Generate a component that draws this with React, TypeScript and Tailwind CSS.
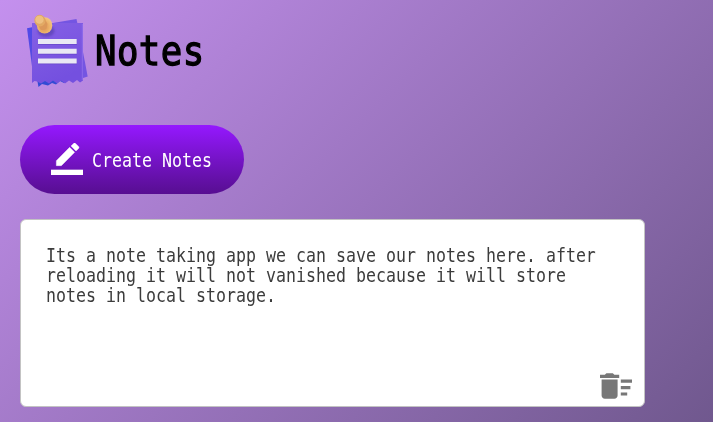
const NoteLogo = () => (
  <svg width="66" height="78" viewBox="24 12 66 78" aria-hidden="true">
    <defs>
      <linearGradient id="paper" x1="0" y1="0" x2="0.4" y2="1">
        <stop offset="0" stopColor="#8560e5" />
        <stop offset="1" stopColor="#7450df" />
      </linearGradient>
      <linearGradient id="back" x1="0" y1="0" x2="0" y2="1">
        <stop offset="0" stopColor="#4f49e8" />
        <stop offset="1" stopColor="#5c4ddd" />
      </linearGradient>
      <radialGradient id="pin" cx="0.45" cy="0.6" r="0.6">
        <stop offset="0" stopColor="#d98f50" />
        <stop offset="0.6" stopColor="#ecb268" />
        <stop offset="1" stopColor="#f2c680" />
      </radialGradient>
      <filter id="soft" x="-50%" y="-50%" width="200%" height="200%">
        <feGaussianBlur stdDeviation="1.3" />
      </filter>
    </defs>
    <path d="M50 23.500L76.500 19L77.500 24L83 52L87.700 76.500L83 78L60 80Z" fill="#7455e2" />
    <path d="M27 28.300L33 27V74Z" fill="url(#back)" />
    <path d="M37 79L38.500 87L42 84L48 85.500L52 83L56 84.500L60 81L64 83L66 79Z" fill="#334bd4" />
    <path d="M32 23H83V80.500L80 82.500L77 80L73 83L69 80.500L65 83.500L61 80.500L57 83.500L53 80.500L49 83.500L45 81L41 83.500L37 81.500L34.500 81L32 83Z" fill="url(#paper)" />
    <path d="M82.300 24V80" stroke="#9472ed" strokeWidth="0.8" />
    <ellipse cx="46" cy="31" rx="8.500" ry="6" fill="#533da9" opacity="0.6" filter="url(#soft)" />
    <path d="M38 42H77M38 51.700H77M38 61.400H77" stroke="#5d3fbd" strokeWidth="5.500" opacity="0.65" />
    <path d="M38 41.500H76.700M38 51.200H76.700M38 60.900H76.700" stroke="#e9e8f4" strokeWidth="5" />
    <ellipse cx="44.600" cy="25.400" rx="7.700" ry="8.200" fill="url(#pin)" />
    <path d="M36.500 22L40.500 29.500Q44 31 46.500 28.500L47.500 24L44.500 18Z" fill="#db985a" />
    <ellipse cx="40" cy="20.700" rx="5.500" ry="5.700" fill="#e3aa64" />
    <ellipse cx="39.500" cy="19.700" rx="4.600" ry="4.500" fill="#eec080" stroke="#d99d5d" strokeWidth="0.6" />
  </svg>
);

const PencilIcon = () => (
  <svg width="32" height="32" viewBox="0 0 24 24" fill="currentColor" aria-hidden="true">
    <path
      d="M17.750 7L14 3.250l-10 10V17h3.750l10-10zm2.960-2.960c.39-.39.39-1.020 0-1.410L18.370.29a.996.996 0 00-1.410 0L15 2.250 18.750 6l1.960-1.960z"
      stroke="currentColor"
      strokeWidth="0.3"
    />
    <path d="M0 20h24v4H0z" />
  </svg>
);

const DeleteIcon = () => (
  <svg width="32" height="26" viewBox="2 4 20 16" fill="currentColor" aria-hidden="true">
    <path d="M15 16h4v2h-4zm0-8h7v2h-7zm0 4h6v2h-6zM3 18c0 1.100.9 2 2 2h6c1.100 0 2-.9 2-2V8H3v10zM14 5h-3l-1-1H6L5 5H2v2h12V5z" />
  </svg>
);

export default function App() {
  return (
    <main className="h-[422px] w-[713px] overflow-hidden bg-[linear-gradient(135deg,#c490ee_0%,#70588e_100%)] pl-5 pt-3 font-['DejaVu_Sans_Mono',monospace]">
      <header className="flex h-[78px] items-center pl-1">
        <NoteLogo />
        <h1 className="ml-[5px] origin-left scale-x-[0.87] text-[41px] leading-[78px] tracking-[0.5px] text-black [-webkit-text-stroke:1.3px_black]">
          Notes
        </h1>
      </header>

      <button className="mt-[35px] flex h-[69px] w-[224px] items-center rounded-[35px] bg-linear-to-b from-[#9518ff] to-[#570e91] pb-px pl-[31px] text-white">
        <PencilIcon />
        <span className="ml-[9px] origin-left scale-x-[0.874] whitespace-nowrap pt-px text-[19px] leading-5">
          Create Notes
        </span>
      </button>

      <section className="mt-[25px] flex h-[188px] w-[625px] flex-col justify-between rounded-md border border-[#c3c3c3] bg-white pb-[7px] pl-[25px] pr-3 pt-[25px] text-[#3c3c3c]">
        <p className="origin-left scale-x-[0.874] whitespace-pre text-[19px] leading-5">
          {"Its a note taking app we can save our notes here. after\nreloading it will not vanished because it will store\nnotes in local storage."}
        </p>
        <button className="self-end text-[#777]" aria-label="Delete note">
          <DeleteIcon />
        </button>
      </section>
    </main>
  );
}
